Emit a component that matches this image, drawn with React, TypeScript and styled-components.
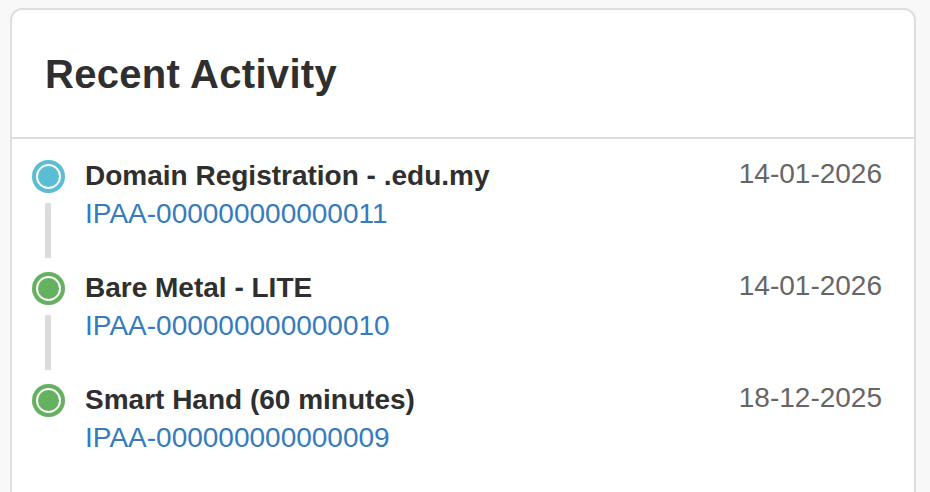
import React from "react";
import styled, { createGlobalStyle } from "styled-components";

const GlobalStyle = createGlobalStyle`
  html, body {
    margin: 0;
    padding: 0;
    background: #f8f8f8;
    overflow: hidden;
    font-family: "Liberation Sans", Arial, Helvetica, sans-serif;
  }
  * { box-sizing: border-box; }
`;

const Page = styled.div`
  padding: 8px 14px 0 10px;
`;

const Card = styled.section`
  background: #fff;
  border: 2px solid #dedede;
  border-bottom: none;
  border-radius: 12px 12px 0 0;
  min-height: 484px;
`;

const Header = styled.header`
  padding: 43px 34px 42px 33px;
  border-bottom: 2px solid #dddddd;
`;

const Title = styled.h2`
  margin: 0;
  font-size: 40px;
  line-height: 42px;
  font-weight: 700;
  letter-spacing: 0.3px;
  color: #2f2f2f;
`;

const List = styled.ul`
  list-style: none;
  margin: 0;
  padding: 18px 32px 0 19px;
`;

const Item = styled.li`
  display: grid;
  grid-template-columns: 34px 1fr auto;
  column-gap: 20px;
  height: 112px;
`;

const Marker = styled.div`
  display: flex;
  flex-direction: column;
  align-items: center;
  padding-top: 3px;
`;

const Dot = styled.span<{ $color: string }>`
  width: 33px;
  height: 33px;
  border-radius: 50%;
  background: ${(p) => p.$color};
  box-shadow: inset 0 0 0 4px ${(p) => p.$color}, inset 0 0 0 6px #ffffff;
  flex: none;
`;

const Connector = styled.span`
  width: 6px;
  height: 55px;
  margin-top: 10px;
  background: #dcdcdc;
`;

const Content = styled.div`
  display: flex;
  flex-direction: column;
`;

const Name = styled.div`
  font-size: 28px;
  line-height: 38px;
  font-weight: 700;
  color: #2f2f2f;
`;

const Ref = styled.a`
  font-size: 28px;
  line-height: 38px;
  color: #357bbd;
  text-decoration: none;
`;

const DateText = styled.div`
  font-size: 28px;
  line-height: 38px;
  color: #666666;
  margin-top: -2px;
`;

type Activity = {
  name: string;
  ref: string;
  date: string;
  color: string;
};

const activities: Activity[] = [
  { name: "Domain Registration - .edu.my", ref: "IPAA-000000000000011", date: "14-01-2026", color: "#5bbcd6" },
  { name: "Bare Metal - LITE", ref: "IPAA-000000000000010", date: "14-01-2026", color: "#64b160" },
  { name: "Smart Hand (60 minutes)", ref: "IPAA-000000000000009", date: "18-12-2025", color: "#64b160" },
];

export default function App() {
  return (
    <>
      <GlobalStyle />
      <Page>
        <Card>
          <Header>
            <Title>Recent Activity</Title>
          </Header>
          <List>
            {activities.map((a, i) => (
              <Item key={a.ref}>
                <Marker>
                  <Dot $color={a.color} />
                  {i < activities.length - 1 && <Connector />}
                </Marker>
                <Content>
                  <Name>{a.name}</Name>
                  <Ref href="#">{a.ref}</Ref>
                </Content>
                <DateText>{a.date}</DateText>
              </Item>
            ))}
          </List>
        </Card>
      </Page>
    </>
  );
}
